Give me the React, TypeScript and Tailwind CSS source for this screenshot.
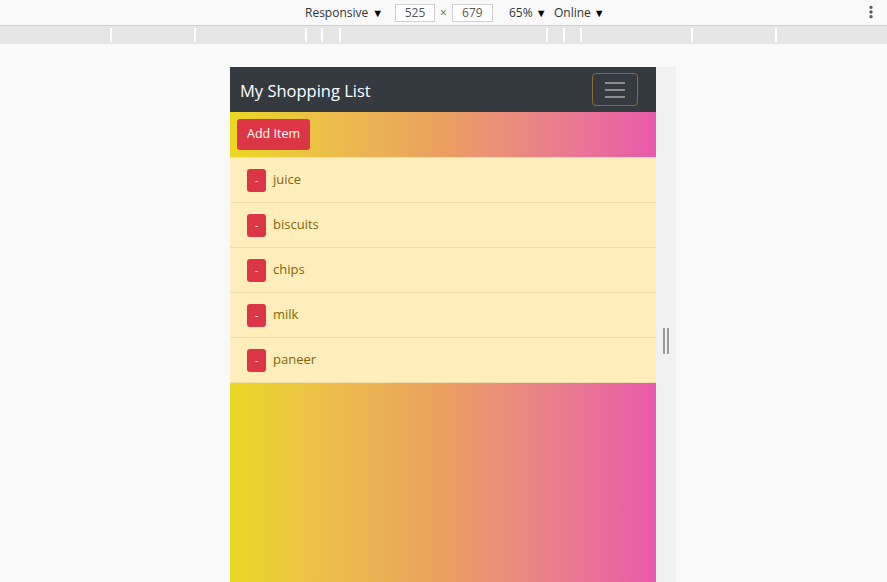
import { EllipsisVertical } from "lucide-react";

const items = ["juice", "biscuits", "chips", "milk", "paneer"];

const segments = [110, 82, 109, 14, 16, 205, 15, 15, 109, 82, 110];

export default function App() {
  return (
    <div className="w-[887px] h-[582px] overflow-hidden bg-[#f9f9f9] flex flex-col font-['Open_Sans',sans-serif]">
      {/* Devtools toolbar */}
      <div className="h-[26px] shrink-0 border-b border-[#cfcfcf] bg-[#f9f9f9] flex items-center text-[12px] text-[#333] relative">
        <div className="absolute left-[305px] top-[4px] flex items-center">
          <span>Responsive</span>
          <span className="ml-[4px] text-[11px] text-black">▼</span>
        </div>
        <div className="absolute left-[395px] top-[4px] flex items-center">
          <div className="w-[40px] h-[18px] border border-[#d0d0d0] bg-white flex items-center justify-center text-[12px] text-[#555]">
            525
          </div>
          <span className="mx-[5px] text-[#666]">×</span>
          <div className="w-[41px] h-[18px] border border-[#d0d0d0] bg-white flex items-center justify-center text-[12px] text-[#555]">
            679
          </div>
        </div>
        <div className="absolute left-[509px] top-[4px] flex items-center">
          <span>65%</span>
          <span className="ml-[3px] text-[11px] text-black">▼</span>
        </div>
        <div className="absolute left-[554px] top-[4px] flex items-center">
          <span>Online</span>
          <span className="ml-[3px] text-[11px] text-black">▼</span>
        </div>
        <EllipsisVertical className="absolute left-[863px] top-[4px] w-[16px] h-[16px] text-[#555]" strokeWidth={3} />
      </div>

      {/* Media query ruler */}
      <div className="h-[18px] shrink-0 bg-[#e5e5e5] flex">
        {segments.map((w, i) => (
          <div key={i} className="flex h-full">
            <div style={{ width: w }} className="h-full" />
            {i < segments.length - 1 && <div className="w-[2px] my-[2px] bg-white" />}
          </div>
        ))}
      </div>

      {/* Viewport */}
      <div className="flex-1 flex pl-[230px] pt-[23px]">
        <div className="w-[426px] flex flex-col">
          {/* Navbar */}
          <div className="h-[45px] shrink-0 bg-[#343a40] flex items-center justify-between pl-[10px] pr-[18px]">
            <span className="text-white text-[16.5px] mt-[3px]">My Shopping List</span>
            <button className="w-[46px] h-[33px] border border-[#8b6d2b] rounded-[4px] flex flex-col items-center justify-center gap-[5px]">
              <span className="block w-[20px] h-[2px] bg-[#8d8f91]" />
              <span className="block w-[20px] h-[2px] bg-[#8d8f91]" />
              <span className="block w-[20px] h-[2px] bg-[#8d8f91]" />
            </button>
          </div>

          {/* Content */}
          <div className="flex-1 bg-gradient-to-r from-[#ebd721] via-[#ea9f5f] to-[#e858aa] pt-[7px]">
            <div className="px-[7px]">
              <button className="h-[31px] px-[10px] bg-[#dc3545] rounded-[3px] text-white text-[12.5px] font-medium">
                Add Item
              </button>
            </div>
            <ul className="mt-[7px] border-t border-[#f1dfa9]">
              {items.map((item) => (
                <li
                  key={item}
                  className="h-[45px] bg-[#ffeebb] border-b border-[#f1dfa9] flex items-center pl-[17px]"
                >
                  <span className="w-[19px] h-[23px] bg-[#dc3545] rounded-[3px] text-white text-[10px] flex items-center justify-center">
                    -
                  </span>
                  <span className="ml-[7px] text-[13px] text-[#856404] mb-[1px]">{item}</span>
                </li>
              ))}
            </ul>
          </div>
        </div>

        {/* Resize handle */}
        <div className="w-[20px] bg-[#f1f1f1] flex justify-center">
          <div className="flex gap-[2px] h-[26px] mt-[261px]">
            <span className="block w-[2px] h-full bg-[#9a9a9a]" />
            <span className="block w-[2px] h-full bg-[#9a9a9a]" />
          </div>
        </div>
      </div>
    </div>
  );
}
